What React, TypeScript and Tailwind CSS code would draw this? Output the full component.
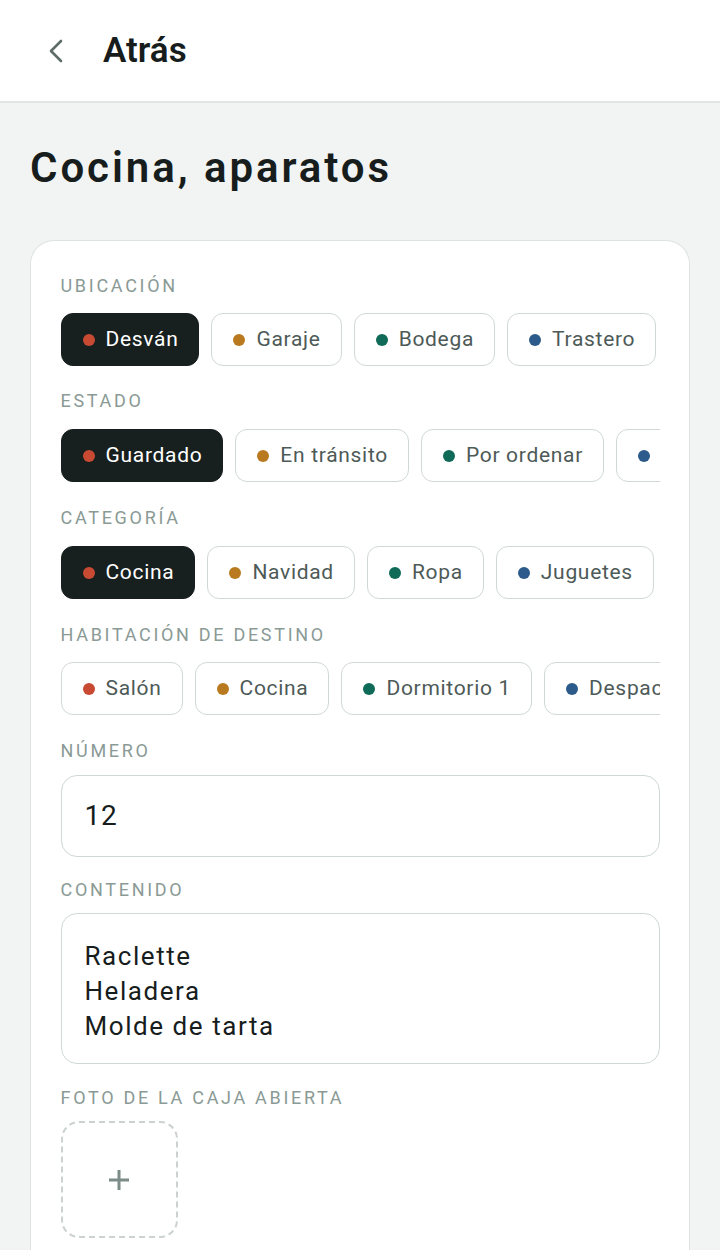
import React from "react";

type Opt = { label: string; color: string };

const DOTS = {
  red: "bg-[#c84a33]",
  amber: "bg-[#b97a1f]",
  teal: "bg-[#0f6b58]",
  blue: "bg-[#2c5a8a]",
};

function Chip({ label, color, active }: { label: string; color: string; active?: boolean }) {
  return (
    <div
      className={
        "flex h-[53px] shrink-0 items-center gap-[11px] rounded-[12px] border-[1.5px] pl-[21px] pr-[20px] " +
        (active
          ? "border-[#18201f] bg-[#18201f] text-white"
          : "border-[#cfd8d5] bg-white text-[#4d5a57]")
      }
    >
      <span className={"h-[12px] w-[12px] shrink-0 rounded-full " + color} />
      <span className="whitespace-nowrap text-[21px] leading-none tracking-[0.033em]">{label}</span>
    </div>
  );
}

function Label({ children }: { children: React.ReactNode }) {
  return (
    <div className="text-[18px] leading-[18px] tracking-[0.15em] text-[#8a9a95]">{children}</div>
  );
}

function ChipRow({ options, active }: { options: Opt[]; active?: number }) {
  return (
    <div className="flex gap-[12px] overflow-hidden">
      {options.map((o, i) => (
        <Chip key={o.label} label={o.label} color={o.color} active={i === active} />
      ))}
    </div>
  );
}

export default function App() {
  return (
    <div
      className="min-h-[1250px] bg-[#f2f4f3] text-[#171d1c]"
      style={{ fontFamily: "Roboto, 'Noto Sans', sans-serif" }}
    >
      <header className="flex h-[103px] items-center border-b-2 border-[#e1e5e4] bg-white">
        <div className="ml-[48px] flex h-[24px] w-[18px] items-center">
          <svg width="16" height="24" viewBox="0 0 16 24" fill="none">
            <path d="M13 2 L3 12 L13 22" stroke="#5f6d69" strokeWidth="2.6" strokeLinecap="round" strokeLinejoin="round" />
          </svg>
        </div>
        <div className="ml-[37px] text-[35px] font-semibold leading-none">Atrás</div>
      </header>

      <div className="px-[30px]">
        <h1 className="pt-[44px] text-[42px] font-semibold leading-[42px] tracking-[0.07em]">
          Cocina, aparatos
        </h1>

        <div className="mt-[51px] rounded-t-[24px] border-[1.5px] border-b-0 border-[#dde3e1] bg-white px-[29.5px] pt-[36px] pb-[40px]">
          <Label>UBICACIÓN</Label>
          <div className="mt-[18px]">
            <ChipRow
              active={0}
              options={[
                { label: "Desván", color: DOTS.red },
                { label: "Garaje", color: DOTS.amber },
                { label: "Bodega", color: DOTS.teal },
                { label: "Trastero", color: DOTS.blue },
              ]}
            />
          </div>

          <div className="mt-[26px]">
            <Label>ESTADO</Label>
          </div>
          <div className="mt-[19px]">
            <ChipRow
              active={0}
              options={[
                { label: "Guardado", color: DOTS.red },
                { label: "En tránsito", color: DOTS.amber },
                { label: "Por ordenar", color: DOTS.teal },
                { label: "Prestado", color: DOTS.blue },
              ]}
            />
          </div>

          <div className="mt-[27px]">
            <Label>CATEGORÍA</Label>
          </div>
          <div className="mt-[19px]">
            <ChipRow
              active={0}
              options={[
                { label: "Cocina", color: DOTS.red },
                { label: "Navidad", color: DOTS.amber },
                { label: "Ropa", color: DOTS.teal },
                { label: "Juguetes", color: DOTS.blue },
              ]}
            />
          </div>

          <div className="mt-[27px]">
            <Label>HABITACIÓN DE DESTINO</Label>
          </div>
          <div className="mt-[18px]">
            <ChipRow
              options={[
                { label: "Salón", color: DOTS.red },
                { label: "Cocina", color: DOTS.amber },
                { label: "Dormitorio 1", color: DOTS.teal },
                { label: "Despacho", color: DOTS.blue },
              ]}
            />
          </div>

          <div className="mt-[27px]">
            <Label>NÚMERO</Label>
          </div>
          <div className="mt-[15px] flex h-[82px] items-center rounded-[16px] border-[1.5px] border-[#cfd8d5] px-[23px] text-[28px] tracking-[0.03em] text-[#171d1c]">
            12
          </div>

          <div className="mt-[24px]">
            <Label>CONTENIDO</Label>
          </div>
          <div className="mt-[14px] h-[151px] rounded-[16px] border-[1.5px] border-[#cfd8d5] px-[23px] pt-[25px] text-[26px] leading-[35px] tracking-[0.06em] text-[#171d1c]">
            <div>Raclette</div>
            <div>Heladera</div>
            <div>Molde de tarta</div>
          </div>

          <div className="mt-[25px]">
            <Label>FOTO DE LA CAJA ABIERTA</Label>
          </div>
          <div className="mt-[14px] flex h-[117px] w-[117px] items-center justify-center rounded-[18px] border-2 border-dashed border-[#cbd2d0]">
            <svg width="24" height="24" viewBox="0 0 24 24">
              <path d="M12 2 V22 M2 12 H22" stroke="#7d8c88" strokeWidth="3" />
            </svg>
          </div>
        </div>
      </div>
    </div>
  );
}
